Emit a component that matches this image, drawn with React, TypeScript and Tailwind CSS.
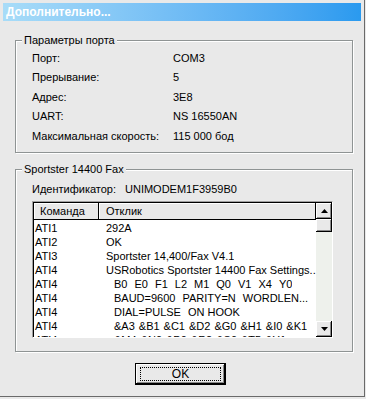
import React from "react";

const font = { fontFamily: '"Liberation Sans", Arial, sans-serif' };

const portRows: [string, string][] = [
  ["Порт:", "COM3"],
  ["Прерывание:", "5"],
  ["Адрес:", "3E8"],
  ["UART:", "NS 16550AN"],
  ["Максимальная скорость:", "115 000 бод"],
];

// indented rows are split into tokens so the gaps can be set like the dialog's
const listRows: { cmd: string; text?: string; tokens?: string[]; gap?: string }[] = [
  { cmd: "ATI1", text: "292A" },
  { cmd: "ATI2", text: "OK" },
  { cmd: "ATI3", text: "Sportster 14,400/Fax V4.1" },
  { cmd: "ATI4", text: "USRobotics Sportster 14400 Fax Settings..." },
  { cmd: "ATI4", tokens: ["B0", "E0", "F1", "L2", "M1", "Q0", "V1", "X4", "Y0"], gap: "gap-[7px]" },
  { cmd: "ATI4", tokens: ["BAUD=9600", "PARITY=N", "WORDLEN..."], gap: "gap-[7px]" },
  { cmd: "ATI4", tokens: ["DIAL=PULSE", "ON HOOK"], gap: "gap-[7px]" },
  { cmd: "ATI4", tokens: ["&A3", "&B1", "&C1", "&D2", "&G0", "&H1", "&I0", "&K1"], gap: "gap-[4px]" },
  { cmd: "ATI4", tokens: ["&M4", "&N0", "&P0", "&R2", "&S0", "&T5", "&Y1"], gap: "gap-[4px]" },
];

const GroupBox = ({
  label,
  className,
  children,
}: {
  label: string;
  className: string;
  children: React.ReactNode;
}) => (
  <div
    className={`relative ml-[15px] w-[338px] border border-[#8f9494] shadow-[inset_1px_1px_0_#ffffff,1px_1px_0_#ffffff] ${className}`}
  >
    <span className="absolute left-[6px] top-[-8px] bg-[#e9e9e9] px-[2px] text-[11px] leading-[14px] text-black">
      {label}
    </span>
    {children}
  </div>
);

const ScrollButton = ({ up }: { up: boolean }) => (
  <div className="flex h-[16px] w-[16px] items-center justify-center bg-[#e9e9e9] shadow-[inset_-1px_-1px_0_#000000,inset_1px_1px_0_#ffffff,inset_-2px_-2px_0_#8a8a8a]">
    <svg width="7" height="4" viewBox="0 0 7 4">
      {up ? (
        <polygon points="3.5,0 7,4 0,4" fill="#000" />
      ) : (
        <polygon points="0,0 7,0 3.5,4" fill="#000" />
      )}
    </svg>
  </div>
);

const App = () => {
  return (
    <div className="h-[399px] w-[366px] overflow-hidden bg-[#e9e9e9]" style={font}>
      <div className="h-[397px] w-[365px] border-b border-r border-[#6a6a6a] pt-[3px]">
        {/* Title bar */}
        <div className="mx-[3px] flex h-[18px] items-center bg-gradient-to-r from-[#a8dcf8] to-[#2a9aef] px-[3px]">
          <span className="text-[12px] font-bold text-white">Дополнительно...</span>
        </div>

        {/* Port parameters */}
        <GroupBox label="Параметры порта" className="mt-[19px] h-[113px] pl-[16px] pt-[7px]">
          {portRows.map(([k, v]) => (
            <div key={k} className="flex h-[19.5px] items-center text-[11px] text-black">
              <span className="w-[141px]">{k}</span>
              <span>{v}</span>
            </div>
          ))}
        </GroupBox>

        {/* Modem */}
        <GroupBox label="Sportster 14400 Fax" className="mt-[16px] h-[183px] pl-[16px] pt-[12px]">
          <div className="flex h-[14px] items-center text-[11px] text-black">
            <span className="w-[93px]">Идентификатор:</span>
            <span>UNIMODEM1F3959B0</span>
          </div>

          {/* List view */}
          <div className="mt-[5px] h-[137px] w-[301px] border border-b-white border-l-[#a0a0a0] border-r-white border-t-[#a0a0a0] shadow-[inset_1px_1px_0_#000000]">
            <div className="flex h-full pl-[1px] pt-[1px]">
              <div className="w-[282px] overflow-hidden bg-white">
                <div className="flex h-[17px] bg-[#e9e9e9] text-[11px] text-black">
                  <div className="flex w-[65px] items-center pl-[6px] shadow-[inset_-1px_-1px_0_#000000,inset_1px_1px_0_#ffffff]">
                    Команда
                  </div>
                  <div className="flex flex-1 items-center pl-[7px] shadow-[inset_-1px_-1px_0_#000000,inset_1px_1px_0_#ffffff]">
                    Отклик
                  </div>
                </div>
                <div className="pt-[1px]">
                  {listRows.map((row, i) => (
                    <div key={i} className="flex h-[14px] items-center text-[11px] text-black">
                      <span className="w-[65px] shrink-0 pl-[1px]">{row.cmd}</span>
                      {row.tokens ? (
                        <span className={`flex overflow-hidden whitespace-nowrap pl-[15px] ${row.gap}`}>
                          {row.tokens.map((t) => (
                            <span key={t}>{t}</span>
                          ))}
                        </span>
                      ) : (
                        <span className="overflow-hidden whitespace-nowrap pl-[7px]">{row.text}</span>
                      )}
                    </div>
                  ))}
                </div>
              </div>
              <div className="flex w-[16px] flex-col bg-[#eef1ec]">
                <ScrollButton up />
                <div className="h-[13px] w-[16px] bg-[#e9e9e9] shadow-[inset_-1px_-1px_0_#000000,inset_1px_1px_0_#ffffff,inset_-2px_-2px_0_#8a8a8a]" />
                <div className="flex-1" />
                <ScrollButton up={false} />
              </div>
            </div>
          </div>
        </GroupBox>

        {/* OK button */}
        <div className="mt-[11px] flex justify-center pr-[3px]">
          <div className="flex h-[22px] w-[91px] items-center justify-center border border-black bg-[#e9e9e9] shadow-[inset_-1px_-1px_0_#000000,inset_1px_1px_0_#ffffff,inset_-2px_-2px_0_#8a8a8a]">
            <div className="flex h-[14px] w-[81px] items-center justify-center border border-dotted border-black text-[12px] text-black">
              OK
            </div>
          </div>
        </div>
      </div>
    </div>
  );
};

export default App;
